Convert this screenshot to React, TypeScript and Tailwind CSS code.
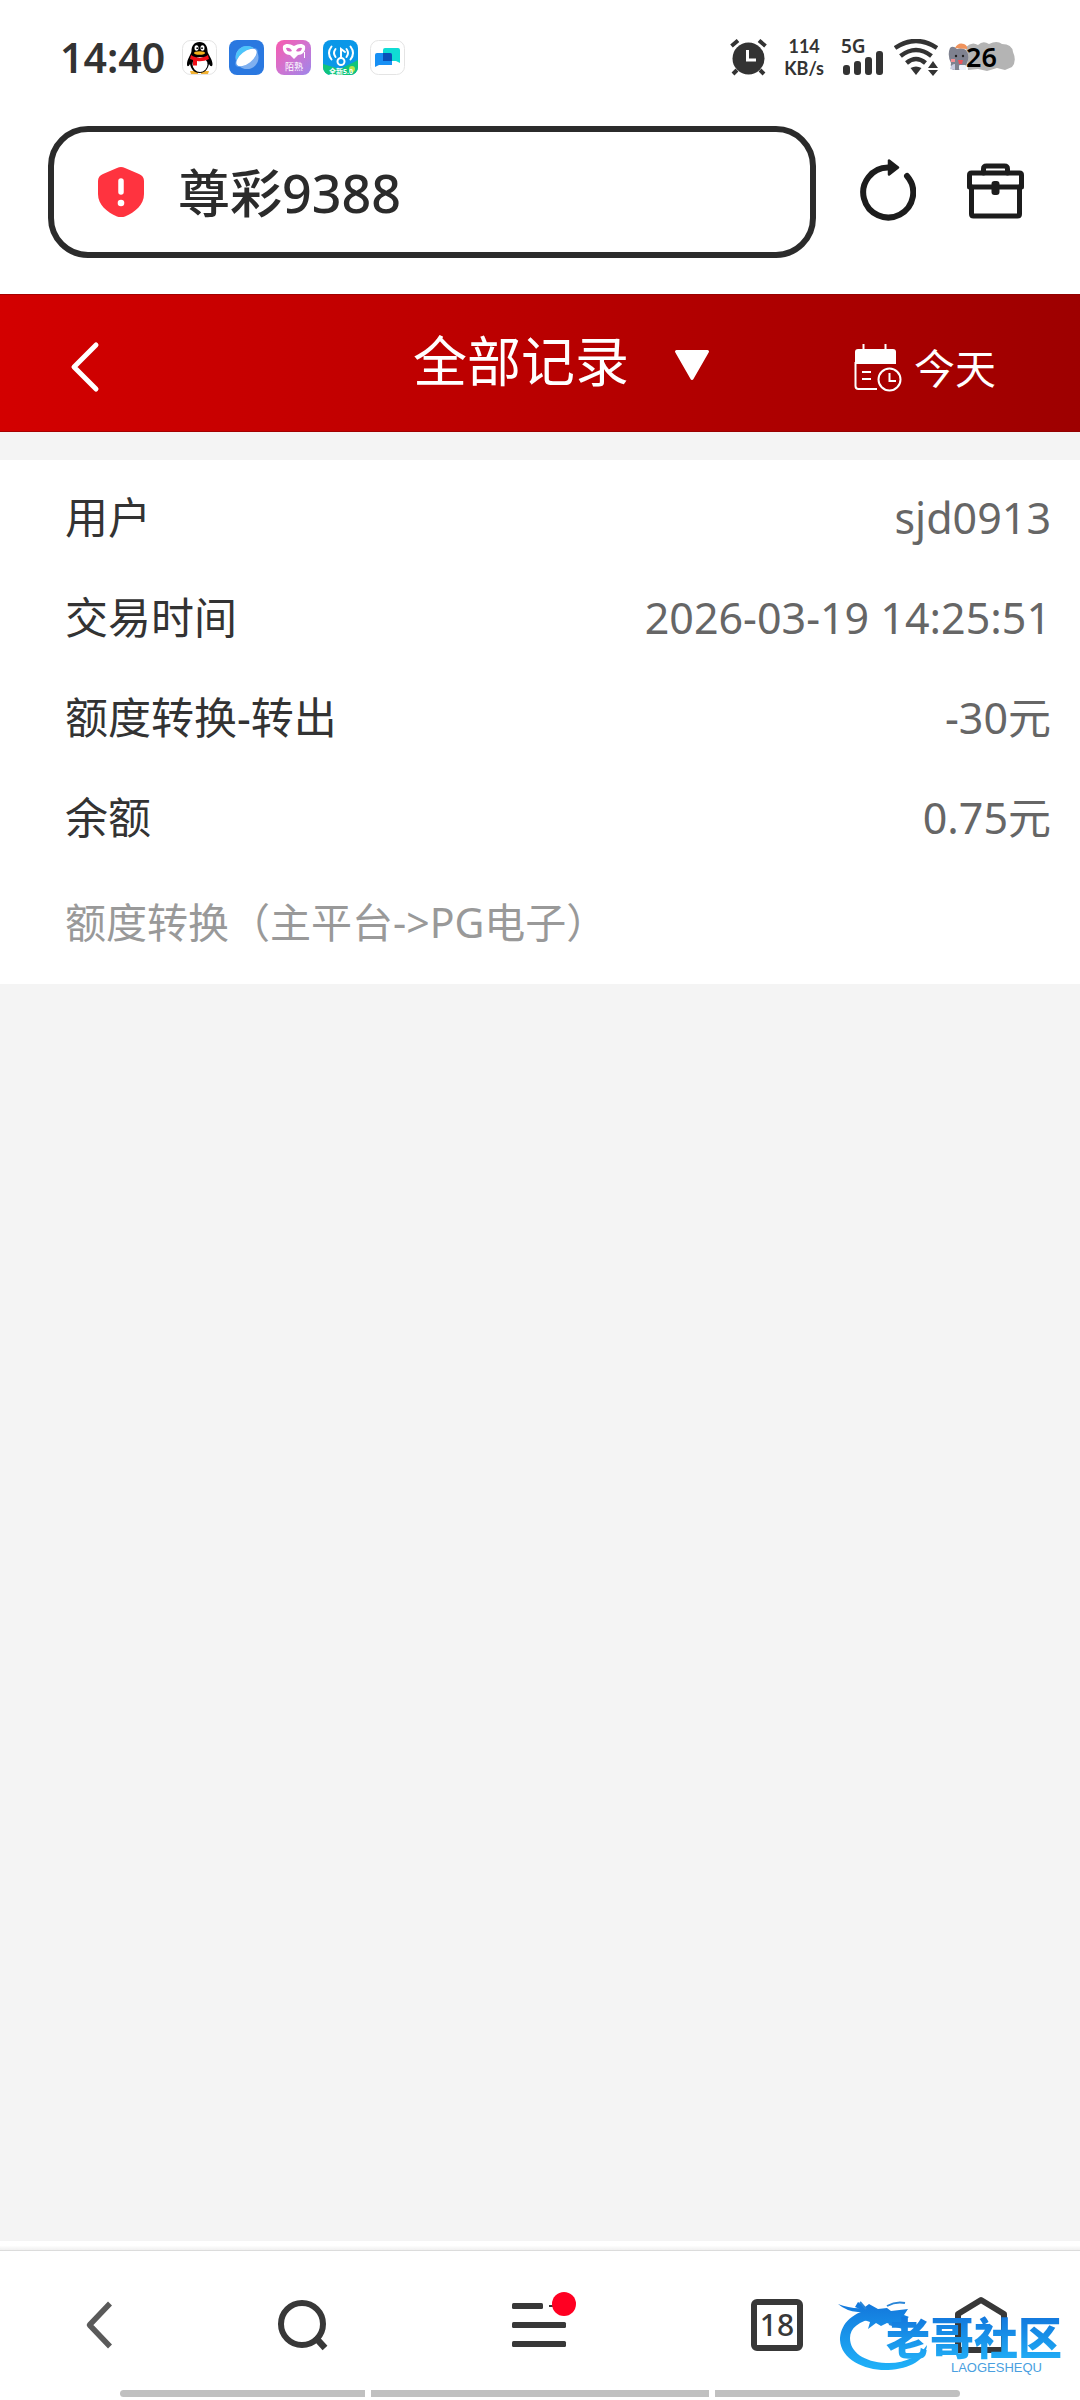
import React from "react";

const records = [
  { label: "用户", value: "sjd0913" },
  { label: "交易时间", value: "2026-03-19 14:25:51" },
  { label: "额度转换-转出", value: "-30元" },
  { label: "余额", value: "0.75元" },
];

function PenguinIcon() {
  return (
    <svg className="size-[35px]" viewBox="0 0 35 35" aria-hidden="true">
      <rect x="0.5" y="0.5" width="34" height="34" rx="8" fill="#fff" stroke="#e4e4e4" />
      <path d="M8 31h8v3H9zM19 31h8l-1 3h-7z" fill="#f2b233" />
      <path d="M17.500 2C12 2 9.500 6 9.500 11c0 3-4.500 8-4.500 13 0 3 1.500 3 3 0 1 5 4 9 9.500 9s8.500-4 9.500-9c1.500 3 3.500 3 3.500 0 0-5-5-10-5-13 0-5-2.500-9-8-9z" fill="#000" />
      <ellipse cx="18" cy="24.500" rx="7.500" ry="7.500" fill="#fff" />
      <path d="M9 15c5 3.500 12 3.500 17 0l1 4c-4 2-8 2.500-12 2v4.500h-4V20l-3-1z" fill="#f01018" />
      <ellipse cx="14.500" cy="8" rx="2" ry="2.800" fill="#fff" />
      <ellipse cx="20.500" cy="8" rx="2" ry="2.800" fill="#fff" />
      <circle cx="15.200" cy="8.200" r="0.900" />
      <circle cx="20" cy="8.200" r="0.900" />
      <ellipse cx="17.500" cy="13" rx="5.500" ry="1.800" fill="#f6b21c" />
    </svg>
  );
}

function PlanetIcon() {
  return (
    <svg className="size-[35px]" viewBox="0 0 35 35" aria-hidden="true">
      <rect width="35" height="35" rx="8" fill="#2a78e0" />
      <circle cx="18" cy="17.500" r="11.500" fill="#7fb0f0" />
      <path d="M7 20A11.500 11.500 0 0 1 27 10z" fill="#4cc5fa" />
      <ellipse cx="17.500" cy="17.500" rx="13.500" ry="6" transform="rotate(-38 17.500 17.500)" fill="#5a9cee" />
      <ellipse cx="17.500" cy="17.500" rx="12" ry="6" transform="rotate(-38 17.500 17.500)" fill="#fff" />
    </svg>
  );
}

function MaskIcon() {
  return (
    <svg className="size-[35px]" viewBox="0 0 35 35" aria-hidden="true">
      <defs>
        <linearGradient id="mask-bg" x1="0" y1="0" x2="1" y2="1">
          <stop offset="0" stopColor="#f95aae" />
          <stop offset="0.500" stopColor="#d073d0" />
          <stop offset="1" stopColor="#9d86ea" />
        </linearGradient>
      </defs>
      <rect width="35" height="35" rx="8" fill="url(#mask-bg)" />
      <path d="M7 6c3-3 7-2 11 0 4-2 8-3 11 0 1 6-3 9-7 9l-4 4-4-4c-4 0-8-3-7-9z" fill="#fff" />
      <path d="M10 8q4-1 6 3-5 2-6-3zM26 8q-4-1-6 3 5 2 6-3z" fill="#da68c4" />
      <path d="M28.500 12v6" stroke="#fff" strokeWidth="1" />
      <text x="18" y="30" textAnchor="middle" fontSize="9" fill="#fff" fontFamily="Noto Sans CJK SC, sans-serif">陌熟</text>
    </svg>
  );
}

function WifiKeyIcon() {
  return (
    <svg className="size-[35px]" viewBox="0 0 35 35" aria-hidden="true">
      <defs>
        <clipPath id="key-clip"><rect width="35" height="35" rx="8" /></clipPath>
      </defs>
      <g clipPath="url(#key-clip)">
        <rect width="35" height="35" fill="#0a97e8" />
        <path d="M0 24q10 3 17 5 10-5 18-9v15H0z" fill="#10c47c" />
        <circle cx="29" cy="29" r="3" fill="#b5e34a" />
        <g fill="none" stroke="#fff" strokeWidth="2" strokeLinecap="round">
          <circle cx="18" cy="21.500" r="3.500" />
          <path d="M18 18V9l4 3M12.500 9q-3 4 0 8M8.500 6.500q-5 6.500 0 13M23.500 9q3 4 0 8M27.500 6.500q5 6.500 0 13" />
        </g>
      </g>
      <text x="18" y="34" textAnchor="middle" fontSize="7" fontWeight="700" fill="#fff" fontFamily="Noto Sans, Noto Sans CJK SC, sans-serif">全新5.0</text>
    </svg>
  );
}

function ChatIcon() {
  return (
    <svg className="size-[35px]" viewBox="0 0 35 35" aria-hidden="true">
      <rect x="0.500" y="0.500" width="34" height="34" rx="8" fill="#fff" stroke="#e4e4e4" />
      <path d="M15 8h13q2 0 2 2v13l-4-2H13V10q0-2 2-2z" fill="#10dcd4" />
      <path d="M7 13h13q2 0 2 2v10H9l-4 2V15q0-2 2-2z" fill="#1890f4" />
      <path d="M13 13h7q2 0 2 2v6h-9z" fill="#0a50b8" />
    </svg>
  );
}

function AlarmIcon() {
  return (
    <svg className="size-[37px]" viewBox="0 0 37 37" aria-hidden="true">
      <circle cx="18.500" cy="19.500" r="16" fill="#333" />
      <path d="M1.500 7L8 1.500M35.500 7L29 1.500" stroke="#333" strokeWidth="4" />
      <path d="M7 31l-4 4M30 31l4 4" stroke="#333" strokeWidth="4" />
      <path d="M17.500 11v10H26" fill="none" stroke="#fff" strokeWidth="3" />
    </svg>
  );
}

function SignalIcon() {
  return (
    <div className="relative h-[37px] w-[43px]">
      <svg className="h-full w-full" viewBox="0 0 43 37" aria-hidden="true">
        <g fill="#333">
          <rect x="2" y="26" width="7" height="10" rx="3" />
          <rect x="13" y="22" width="7" height="14" rx="3" />
          <rect x="24" y="18" width="7" height="18" rx="3" />
          <rect x="35" y="12" width="7" height="24" rx="3" />
        </g>
      </svg>
      <span className="absolute top-[-6px] left-0 text-[19px] leading-[26px] font-semibold text-[#333]">5G</span>
    </div>
  );
}

function WifiIcon() {
  return (
    <svg className="h-[37px] w-[44px]" viewBox="0 0 44 37" aria-hidden="true">
      <g fill="none" stroke="#333" strokeWidth="4.500">
        <path d="M1 9Q22-5 43 9" />
        <path d="M6.500 17Q22 5 37.500 17" />
        <path d="M12.500 24Q22 16 31.500 24" />
      </g>
      <path d="M16.500 29q5.500-3 11 0L22 36z" fill="#333" />
      <path d="M39 22l5 7H34zM34 31h10l-5 6z" fill="#333" />
    </svg>
  );
}

function BatteryIcon() {
  return (
    <div className="relative h-[30px] w-[67px]">
      <svg className="h-full w-full" viewBox="0 0 67 30" aria-hidden="true">
        <path d="M18 5q6-6 12-2 5-5 11-1 8-4 13 0 10 0 11 8 4 9-1 15l-7 3-8-2-10 3-9-2-10 1z" fill="#b4b4b4" />
        <path d="M2 6q3-3 7 1 5-2 9 1 4 6 1 13l-2 7H5q-3-2-2-7Q-1 13 2 6z" fill="#7f8290" />
        <path d="M7 6q3-6 9-4 4 2 3 5z" fill="#f0935c" />
        <circle cx="8" cy="14" r="1.200" fill="#222" />
        <circle cx="15" cy="14" r="1.200" fill="#222" />
        <path d="M3 17h4v3H3z" fill="#f28d92" />
        <path d="M10 18h5l-1 4h-3z" fill="#e8545c" />
        <rect x="11" y="23" width="7" height="5" rx="1" fill="#eef2fb" />
        <path d="M2 27q1-5 5-5v6z" fill="#c9cbe0" />
      </svg>
      <span className="absolute top-[-4px] left-[18px] text-[27px] leading-[38px] font-semibold text-black">26</span>
    </div>
  );
}

function StatusBar() {
  return (
    <div className="flex h-[114px] items-center justify-between pr-[65px] pl-[60px]">
      <div className="flex items-center gap-3">
        <time className="mr-[5px] text-[41px] leading-none font-semibold text-[#333]">14:40</time>
        <PenguinIcon />
        <PlanetIcon />
        <MaskIcon />
        <WifiKeyIcon />
        <ChatIcon />
      </div>
      <div className="flex items-center gap-[10px]">
        <AlarmIcon />
        <div className="mx-[7px] text-center font-['Lato',sans-serif] text-[18px] leading-[22px] font-bold text-[#333]">
          <div>114</div>
          <div>KB/s</div>
        </div>
        <SignalIcon />
        <WifiIcon />
        <BatteryIcon />
      </div>
    </div>
  );
}

function AddressBar() {
  return (
    <div className="flex items-center pt-3 pr-[56px] pb-9 pl-12">
      <label className="flex h-[132px] min-w-0 flex-1 items-center rounded-[40px] border-[6px] border-[#2b2b2b] pl-11">
        <svg className="h-[50px] w-[46px] shrink-0" viewBox="0 0 46 50" aria-hidden="true">
          <path d="M19 1q4-2 8 0l14 6q5 2 5 7v13c0 11-9 18-19 22.500q-4 1.500-8 0C9 45 0 38 0 27V14q0-5 5-7z" fill="#ff333f" />
          <path d="M23 14v11" stroke="#fff" strokeWidth="5.500" strokeLinecap="round" />
          <circle cx="23" cy="36" r="3.300" fill="#fff" />
        </svg>
        <input
          type="text"
          aria-label="网址"
          defaultValue="尊彩9388"
          className="ml-[34px] w-full min-w-0 pt-[2px] text-[52px] leading-[72px] font-medium text-[#2b2b2b] outline-none"
        />
      </label>
      <button type="button" aria-label="刷新" className="ml-[44px] pb-1">
        <svg className="h-[62px] w-[56px]" viewBox="0 0 56 62" aria-hidden="true">
          <path d="M30 8.500H28A25 25 0 1 0 47 17" fill="none" stroke="#1c1c1c" strokeWidth="6" strokeLinecap="round" />
          <path d="M29 1.500v14L38 8.500z" fill="#1c1c1c" stroke="#1c1c1c" strokeWidth="2.500" strokeLinejoin="round" />
        </svg>
      </button>
      <button type="button" aria-label="工具箱" className="ml-[51px] pb-1">
        <svg className="h-[58px] w-[57px]" viewBox="0 0 57 58" aria-hidden="true">
          <g fill="none" stroke="#1c1c1c" strokeWidth="5" strokeLinejoin="round" strokeLinecap="round">
            <path d="M16.500 12V8q0-3 3-3h18q3 0 3 3v4" />
            <path d="M2.500 26V14q0-2 2-2h48q2 0 2 2v12z" />
            <path d="M4.500 26v27q0 2 2 2h44q2 0 2-2V26" />
          </g>
          <rect x="24.500" y="20" width="8" height="14" rx="3" fill="#1c1c1c" />
        </svg>
      </button>
    </div>
  );
}

function PageHeader() {
  return (
    <header className="grid h-[138px] grid-cols-3 items-center border-y border-[#8a0000]/60 bg-linear-to-r from-[#d30000] via-[#b90000] to-[#9e0000] text-white">
      <button type="button" aria-label="返回" className="ml-[69px] justify-self-start pt-2">
        <svg className="h-[52px] w-[32px]" viewBox="0 0 32 52" aria-hidden="true">
          <path d="M27 4L5 26l22 22" fill="none" stroke="#fff" strokeWidth="5" strokeLinecap="round" strokeLinejoin="round" />
        </svg>
      </button>
      <button type="button" className="ml-[53px] flex items-center gap-[45px] justify-self-start pb-1 whitespace-nowrap">
        <span className="text-[54px] leading-[72px]">全部记录</span>
        <svg className="mt-2 h-[32px] w-[36px]" viewBox="0 0 36 32" aria-hidden="true">
          <path d="M2.500 2.500h31L18 29.500z" fill="#fff" stroke="#fff" strokeWidth="3" strokeLinejoin="round" />
        </svg>
      </button>
      <button type="button" className="mr-[84px] flex items-center gap-3 justify-self-end pt-[10px]">
        <svg className="h-[48px] w-[48px]" viewBox="0 0 48 48" aria-hidden="true">
          <path d="M1 20V8q0-3 3-3h35q3 0 3 3v12z" fill="#fff" />
          <g fill="none" stroke="#fff" strokeWidth="2">
            <path d="M9.500 0v6M31.500 0v6M1.500 18v24q0 3 3 3H23M8 28h9M8 35h9" />
            <circle cx="35.500" cy="35.500" r="11" />
            <path d="M35.500 29v8H42" />
          </g>
        </svg>
        <span className="text-[41px] leading-[56px]">今天</span>
      </button>
    </header>
  );
}

function RecordCard() {
  return (
    <section className="bg-white pt-2 pr-[29px] pb-2 pl-[65px]">
      <dl>
        {records.map((r) => (
          <div key={r.label} className="flex h-[100px] items-center justify-between text-[43px] leading-[60px]">
            <dt className="text-[#333]">{r.label}</dt>
            <dd className="text-[#666]">{r.value}</dd>
          </div>
        ))}
      </dl>
      <p className="flex h-[108px] items-center text-[41px] leading-[60px] text-[#999]">额度转换（主平台-&gt;PG电子）</p>
    </section>
  );
}

function Watermark() {
  return (
    <div className="pointer-events-none absolute right-[18px] bottom-[26px] h-[80px] w-[224px]">
      <svg className="absolute inset-0 h-full w-full" viewBox="0 0 224 80" aria-hidden="true">
        <defs>
          <linearGradient id="dragon" x1="0" y1="10" x2="0" y2="78" gradientUnits="userSpaceOnUse">
            <stop offset="0" stopColor="#1378dc" />
            <stop offset="1" stopColor="#20b4fa" />
          </linearGradient>
        </defs>
        <g fill="url(#dragon)">
          <path d="M33 15C12 19 2 32 2 46c1 20 26 31 48 30 22-1 38-10 39-25-7 11-23 19-41 18C26 68 12 58 12 44c0-10 9-17 25-20z" />
          <path d="M24 16l-7-3 3-5 7 5 4-3 9 5 9-1 4 3 17-2-4 6 5 2-6 4 3 4-12 1-7-3-6 3-5-3-8 6 2-7-9-3z" />
          <path d="M0 10q12 5 26 4l3 5-9-1Q8 17 0 10z" />
        </g>
        <path d="M22 8l6 7M49 12q9-5 18-3M51 30l14 4" fill="none" stroke="#2a86d8" strokeWidth="2" />
      </svg>
      <div className="absolute top-[21px] right-0 bg-linear-to-b from-[#1476dc] to-[#22aef6] bg-clip-text text-[44px] leading-[46px] font-black whitespace-nowrap text-transparent">老哥社区</div>
      <div className="absolute top-[67px] right-[20px] font-['Liberation_Sans',sans-serif] text-[13px] leading-[14px] text-[#4a9fe0]">LAOGESHEQU</div>
    </div>
  );
}

function BottomNav() {
  return (
    <footer className="relative bg-white">
      <div className="h-[9px] bg-linear-to-b from-white via-white to-[#f0f0f0]" />
      <nav className="grid h-[140px] grid-cols-[198fr_210fr_264fr_210fr_198fr] items-center justify-items-center border-t border-[#dcdcdc] pt-[9px]">
        <button type="button" aria-label="后退">
          <svg className="h-[50px] w-[28px]" viewBox="0 0 28 50" aria-hidden="true">
            <path d="M25 3.500L4.500 25 25 46.500" fill="none" stroke="#5a5a5a" strokeWidth="5.500" strokeLinejoin="round" />
          </svg>
        </button>
        <button type="button" aria-label="搜索">
          <svg className="size-[52px]" viewBox="0 0 52 52" aria-hidden="true">
            <circle cx="25" cy="25" r="21" fill="none" stroke="#383838" strokeWidth="6" />
            <path d="M38 38l10 11" stroke="#383838" strokeWidth="6.500" />
          </svg>
        </button>
        <button type="button" aria-label="菜单" className="relative">
          <svg className="h-[46px] w-[56px]" viewBox="0 0 56 46" aria-hidden="true">
            <g fill="#383838">
              <rect x="0" y="1" width="31" height="6" rx="1.500" />
              <rect x="37" y="3" width="6" height="2" />
              <rect x="0" y="20" width="54" height="6" rx="1.500" />
              <rect x="0" y="39" width="54" height="6" rx="1.500" />
            </g>
          </svg>
          <span className="absolute -top-[10px] -right-2 size-6 rounded-full bg-[#ff0022]" />
        </button>
        <button type="button" aria-label="标签页" className="flex size-[52px] items-center justify-center rounded-[6px] border-[6px] border-[#383838] text-[30px] leading-none font-medium text-[#383838]">
          18
        </button>
        <button type="button" aria-label="主页">
          <svg className="h-[58px] w-[54px]" viewBox="0 0 54 58" aria-hidden="true">
            <path d="M4 54V18L27 4l23 14v36z" fill="none" stroke="#383838" strokeWidth="6" strokeLinejoin="round" />
          </svg>
        </button>
      </nav>
      <Watermark />
      <div className="mx-[120px] flex gap-[6px] pb-[3px]">
        <div className="h-[7px] flex-[245] rounded-l-full bg-[#c0c0c0]" />
        <div className="h-[7px] flex-[338] bg-[#c0c0c0]" />
        <div className="h-[7px] flex-[245] rounded-r-full bg-[#c0c0c0]" />
      </div>
    </footer>
  );
}

export default function App() {
  return (
    <div className="flex min-h-screen flex-col bg-white font-['Noto_Sans','Noto_Sans_CJK_SC',sans-serif]">
      <StatusBar />
      <AddressBar />
      <PageHeader />
      <main className="flex-1 bg-[#f4f4f4] pt-7">
        <RecordCard />
      </main>
      <BottomNav />
    </div>
  );
}
